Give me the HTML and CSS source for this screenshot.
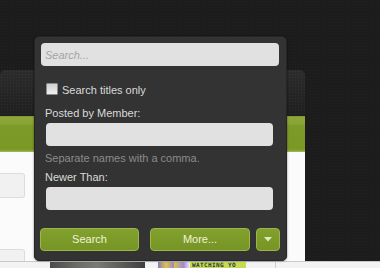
FILE: index.html
```html
<!DOCTYPE html>
<html lang="en">
<head>
<meta charset="utf-8">
<title>Search</title>
<link rel="stylesheet" href="styles.css">
</head>
<body>
<div class="site">
  <div class="header"></div>
  <div class="navbar"></div>
  <div class="tabbar"></div>
  <div class="content">
    <div class="sidebox"></div>
    <div class="sidebox sidebox-low"></div>
  </div>
</div>
<div class="strip">
  <div class="photo"></div>
  <div class="avatars"><span class="av av1"></span><span class="av av2"></span></div>
  <div class="badge">WATCHING YO</div>
  <div class="divider"></div>
</div>
<form class="popup">
  <input class="search-field" type="search" placeholder="Search...">
  <div class="options">
    <label class="check-row"><input type="checkbox" class="check"><span>Search titles only</span></label>
    <div class="label">Posted by Member:</div>
    <input class="field" type="text">
    <div class="hint">Separate names with a comma.</div>
    <div class="label">Newer Than:</div>
    <input class="field" type="text">
  </div>
  <div class="buttons">
    <button type="button" class="btn btn-search">Search</button>
    <button type="button" class="btn btn-more">More...</button>
    <button type="button" class="btn btn-drop"><svg width="8" height="5" viewBox="0 0 8 5"><path d="M0 0H8L4 4.5Z" fill="#dfe8bf"/></svg></button>
  </div>
</form>
</body>
</html>
```
FILE: styles.css
```css
* { box-sizing: border-box; }
html, body { margin: 0; padding: 0; }
body {
  width: 380px;
  height: 268px;
  overflow: hidden;
  position: relative;
  background-color: #1c1c1c;
  background-image: radial-gradient(circle, rgba(255,255,255,0.025) 0.7px, transparent 1px);
  background-size: 3px 3px;
  font-family: "Liberation Sans", Arial, sans-serif;
  font-size: 11px;
}
.site { width: 305px; }
.header { height: 70px; }
.navbar {
  height: 46px;
  border-radius: 5px 5px 0 0;
  background-color: #242424;
  background-image:
    radial-gradient(circle, rgba(255,255,255,0.05) 0.7px, transparent 1px),
    linear-gradient(#2c2c2c, #1f1f1f);
  background-size: 3px 3px, 100% 100%;
}
.tabbar {
  height: 36px;
  background: linear-gradient(#6f8d22 0, #8ca63a 1px, #89a335 8px, #7c9a27 10px, #7a9826 33px, #8fa944 35px, #a5bc62 36px);
}
.content {
  height: 109px;
  overflow: hidden;
  background: #fbfbfb;
  padding-top: 21px;
}
.sidebox {
  width: 25px;
  height: 25px;
  background: #f1f1f1;
  border: 1px solid #dcdcdc;
  border-left: none;
  border-radius: 0 3px 3px 0;
}
.sidebox-low { margin-top: 51px; height: 30px; }

.strip {
  height: 7px;
  border-top: 1px solid #c9c9c9;
  background: #f3f3f3;
  display: flex;
  overflow: hidden;
}
.photo {
  margin-left: 50px;
  width: 95px;
  background: linear-gradient(90deg, #4a4a4a, #6d6d68 30%, #7a7a74 50%, #5c5c58 75%, #3e3e3e);
}
.avatars { margin-left: 13px; width: 32px; display: flex; }
.av { width: 16px; height: 6px; }
.av1 { background: linear-gradient(90deg, #8a78b8, #e0c24a 50%, #9b86c4); }
.av2 { background: linear-gradient(90deg, #d8c050, #a08ad0 60%, #f0f0f0); }
.badge {
  width: 56px;
  height: 6px;
  background: #c8da52;
  color: #1e3a4a;
  font-family: "DejaVu Sans Mono", monospace;
  font-weight: bold;
  font-size: 6px;
  line-height: 6px;
  padding-left: 2px;
  letter-spacing: 0.4px;
  white-space: nowrap;
}
.divider { margin-left: 29px; width: 1px; background: #cfcfcf; }

.popup {
  position: absolute;
  left: 34px;
  top: 36px;
  width: 253px;
  margin: 0;
  padding: 6px 7px 9px 6px;
  background: #333333;
  border: 1px solid #262626;
  border-radius: 5px;
  box-shadow: 0 0 2px rgba(0,0,0,0.6);
}
.search-field {
  display: block;
  width: 100%;
  height: 23px;
  margin: 0;
  padding: 0 4px;
  border: none;
  border-radius: 4px;
  background: #e1e1e1;
  font: italic 11px "Liberation Sans", Arial, sans-serif;
  color: #333;
  outline: none;
}
.search-field::placeholder { color: #a4a4a4; }
.options { padding: 0 6px 0 4px; }
.check-row {
  display: flex;
  align-items: flex-start;
  margin-top: 17px;
  color: #dadada;
}
.check {
  appearance: none;
  -webkit-appearance: none;
  width: 12px;
  height: 12px;
  margin: 0 4px 0 1px;
  border: 1px solid #8c8c8c;
  border-radius: 1px;
  background: linear-gradient(#cfcfcf, #f0f0f0);
}
.check-row span { line-height: 12px; margin-top: 1px; }
.label {
  margin-top: 10px;
  line-height: 14px;
  color: #dadada;
}
.hint {
  margin-top: 5px;
  line-height: 14px;
  color: #8b8b8b;
}
.hint + .label { margin-top: 5px; }
.field {
  display: block;
  width: 227px;
  height: 23px;
  margin: 3px 0 0 1px;
  padding: 0 4px;
  border: none;
  border-radius: 4px;
  background: #e1e1e1;
  outline: none;
}
.buttons {
  display: flex;
  margin: 18px -1px 0 -1px;
}
.btn {
  height: 23px;
  margin: 0;
  padding: 0;
  border: 1px solid #9bb64b;
  border-radius: 4px;
  background: linear-gradient(#82a02d, #779524);
  color: #eef3dc;
  font: 11px "Liberation Sans", Arial, sans-serif;
  text-align: center;
  line-height: 21px;
  display: flex;
  align-items: center;
  justify-content: center;
}
.btn-search { width: 99px; }
.btn-more { width: 100px; margin-left: 11px; }
.btn-drop { width: 24px; margin-left: 6px; }
```
